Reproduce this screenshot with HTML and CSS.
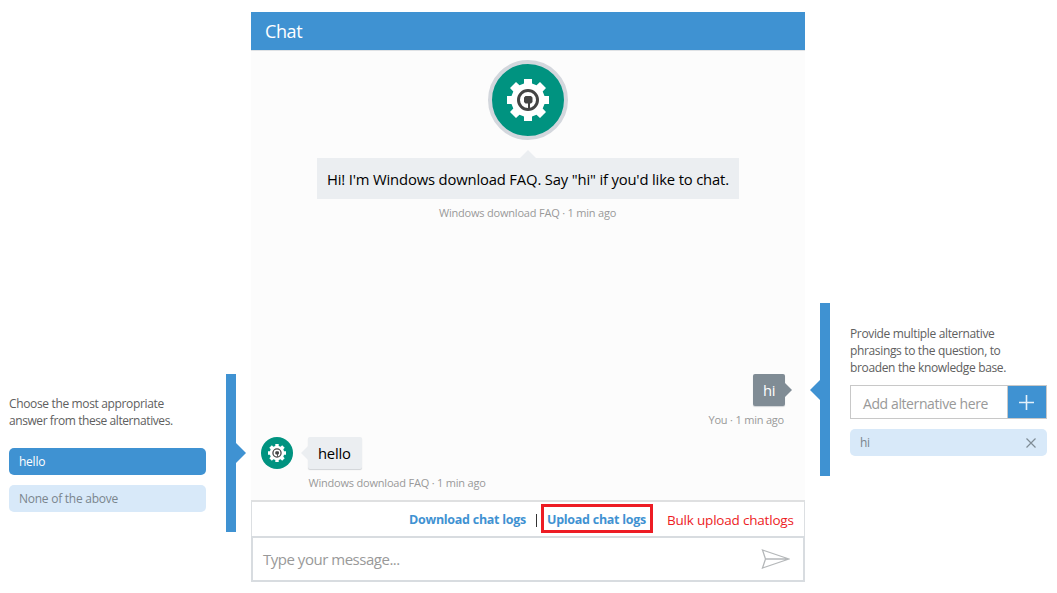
FILE: index.html
```
<!DOCTYPE html>
<html lang="en">
<head>
<meta charset="utf-8">
<title>Chat</title>
<link rel="stylesheet" href="styles.css">
</head>
<body>
<svg class="defs" width="0" height="0" aria-hidden="true">
  <symbol id="gear" viewBox="0 0 42 42">
    <path fill="#fff" d="M17 0h8v4.500l4.500 1.800L33 3l6 6-3.300 3.500L37.500 17H42v8h-4.500l-1.800 4.500L39 33l-6 6-3.500-3.300L25 37.500V42h-8v-4.500l-4.500-1.800L9 39l-6-6 3.300-3.500L4.500 25H0v-8h4.500l1.800-4.500L3 9l6-6 3.500 3.300L17 4.500z"/>
    <circle cx="21" cy="21" r="9.500" fill="none" stroke="#444" stroke-width="3"/>
    <path fill="#444" d="M18.500 17h5.500l1.500 1.500V23l-1.500 1.500h-1V30h-2v-5.500h-2.500L17 23v-4.500z"/>
  </symbol>
</svg>
<main class="page">
  <aside class="side side-left">
    <div class="side-content">
      <p class="hint">Choose the most appropriate<br><span class="tight">answer from these alternatives.</span></p>
      <div class="option selected">hello</div>
      <div class="option none">None of the above</div>
    </div>
    <div class="bar"></div>
  </aside>
  <section class="chat">
    <header class="chat-head"><span>Chat</span></header>
    <div class="chat-body">
      <div class="avatar large"><svg width="42" height="42"><use href="#gear"/></svg></div>
      <div class="welcome"><span>Hi! I'm Windows download FAQ. Say "hi" if you'd like to chat.</span></div>
      <div class="meta center"><span>Windows download FAQ · 1 min ago</span></div>
      <div class="row-user"><div class="bubble user">hi</div></div>
      <div class="meta right"><span>You · 1 min ago</span></div>
      <div class="row-bot">
        <div class="avatar small"><svg width="18" height="18"><use href="#gear"/></svg></div>
        <div class="bubble bot">hello</div>
      </div>
      <div class="meta left"><span>Windows download FAQ · 1 min ago</span></div>
    </div>
    <div class="logs">
      <a class="download">Download chat logs</a>
      <i class="divider"></i>
      <a class="upload"><span>Upload chat logs</span></a>
      <span class="note">Bulk upload chatlogs</span>
    </div>
    <div class="compose">
      <span class="placeholder">Type your message...</span>
      <svg width="30" height="20" viewBox="0 0 30 20" fill="none" stroke="#b5b8ba" stroke-width="1.300"><path d="M2.500 1 29 10 2.500 19 5.500 10zM5.500 10h23"/></svg>
    </div>
  </section>
  <aside class="side side-right">
    <div class="bar"></div>
    <div class="side-content">
      <p class="hint">Provide multiple alternative<br>phrasings to the question, to<br>broaden the knowledge base.</p>
      <div class="add">
        <span class="add-text"><span>Add alternative here</span></span>
        <span class="plus"><svg width="15" height="15" stroke="#e4f1fb" stroke-width="1.600"><path d="M7.500 0v15M0 7.500h15"/></svg></span>
      </div>
      <div class="option chip"><span>hi</span><svg width="10" height="10" stroke="#7f8c96" stroke-width="1.200"><path d="M.5.5l9 9M9.500.5l-9 9"/></svg></div>
    </div>
  </aside>
</main>
</body>
</html>
```
FILE: styles.css
```
* { box-sizing: border-box; }
body { margin: 0; background: #fff; font-family: "Open Sans", "Noto Sans", sans-serif; }
.defs { position: absolute; }
.page { display: flex; align-items: flex-start; width: 1057px; height: 593px; overflow: hidden; white-space: nowrap; }
.side { display: flex; }
.side-left { width: 236px; margin: 374px 15px 0 0; height: 158px; }
.side-left .side-content { width: 226px; padding: 21px 20px 0 9px; }
.side-right { width: 237px; margin: 303px 0 0 15px; height: 173px; }
.side-right .side-content { width: 227px; padding: 22px 10px 0 20px; }
.bar { position: relative; width: 10px; background: #3f92d2; flex: none; }
.bar::after { content: ""; position: absolute; width: 10px; height: 20px; background: #3f92d2; }
.side-left .bar::after { left: 10px; top: 69px; clip-path: polygon(0 0, 100% 50%, 0 100%); }
.side-right .bar::after { right: 10px; top: 77px; clip-path: polygon(100% 0, 0 50%, 100% 100%); }
.hint { margin: 0; font-size: 12px; letter-spacing: -0.350px; line-height: 17px; color: #606060; }
.tight { letter-spacing: -0.420px; }
.side-left .hint { margin-bottom: 19px; }
.side-right .hint { margin-bottom: 9px; }
.option { height: 27px; border-radius: 5px; padding: 0 9px 0 10px; font-size: 12px; letter-spacing: -0.250px; line-height: 28px; background: #d8e9f9; color: #7a858d; }
.option.selected { background: #3f92d2; color: #fff; margin-bottom: 10px; }
.chip { display: flex; align-items: center; justify-content: space-between; padding-right: 11px; }
.add { display: flex; height: 34px; border: 1px solid #c8c8c8; margin-bottom: 10px; }
.add-text { width: 157px; padding-left: 12px; font-size: 14px; letter-spacing: -0.400px; line-height: 35px; color: #999; border-right: 1px solid #c8c8c8; }
.plus { flex: 1; display: flex; align-items: center; justify-content: center; padding-right: 1px; background: #3f92d2; }
.chat { width: 554px; margin-top: 12px; }
.chat-head { height: 39px; padding-left: 14px; background: #3f92d2; border-bottom: 1px solid #dfe2e5; color: #fff; font-size: 18px; letter-spacing: -0.400px; line-height: 39px; }
.chat-body { height: 449px; padding-top: 9px; background: #fcfcfc; }
.avatar { display: flex; align-items: center; justify-content: center; background: #009380; border-radius: 50%; }
.avatar.large { width: 80px; height: 80px; border: 4px solid #d3d7dd; margin: 0 auto 18px 237px; }
.avatar.small { width: 32px; height: 32px; }
.welcome { position: relative; width: 422px; height: 41px; margin-left: 66px; padding-left: 10px; background: #ebeef1; color: #000; font-size: 14.800px; letter-spacing: -0.160px; line-height: 43px; }
.welcome::before { content: ""; position: absolute; left: 203px; top: -8px; width: 16px; height: 8px; background: #ebeef1; clip-path: polygon(50% 0, 100% 100%, 0 100%); }
.meta { font-size: 11px; letter-spacing: -0.200px; line-height: 14px; color: #999; }
.meta.center { padding-left: 188px; margin-top: 7px; }
.row-user { display: flex; justify-content: flex-end; padding-right: 20px; margin-top: 154px; }
.bubble { position: relative; height: 32px; border-radius: 2px; padding: 0 10px; font-size: 14.800px; letter-spacing: -0.200px; line-height: 33px; box-shadow: 0 1px 1px #d0d3d6; }
.bubble::after { content: ""; position: absolute; top: 9px; width: 7px; height: 14px; }
.user { width: 32px; background: #808c95; color: #fff; }
.user::after { right: -7px; background: #808c95; clip-path: polygon(0 0, 100% 50%, 0 100%); }
.meta.right { margin-top: 7px; padding-left: 457.500px; }
.row-bot { display: flex; gap: 15px; padding-left: 10px; margin-top: 10px; }
.bot { width: 54px; background: #ebeef1; color: #000; }
.bot::after { left: -7px; background: #ebeef1; clip-path: polygon(100% 0, 0 50%, 100% 100%); }
.meta.left { margin-top: 7px; padding-left: 57.500px; }
.logs { display: flex; align-items: center; height: 36px; padding-left: 157px; border: 1px solid #dcdfe2; border-top: 2px solid #dfe0e1; border-bottom: 0; font-size: 12.500px; letter-spacing: -0.270px; color: #3f92d2; font-weight: 700; }
.download { width: 118px; }
.divider { width: 1px; height: 13px; margin: 2px 4px 0 9px; background: #333; }
.upload { width: 112px; height: 29px; border: 3px solid #ed1c24; padding-left: 3px; line-height: 25px; margin-top: -1px; }
.note { margin: 2px 0 0 14px; font-weight: 400; color: #ed1c24; font-size: 13.500px; letter-spacing: -0.200px; }
.compose { display: flex; align-items: center; justify-content: space-between; height: 46px; border: 2px solid #d8dce0; padding: 0 13px 0 10px; font-size: 15px; letter-spacing: -0.480px; color: #999; }
```
